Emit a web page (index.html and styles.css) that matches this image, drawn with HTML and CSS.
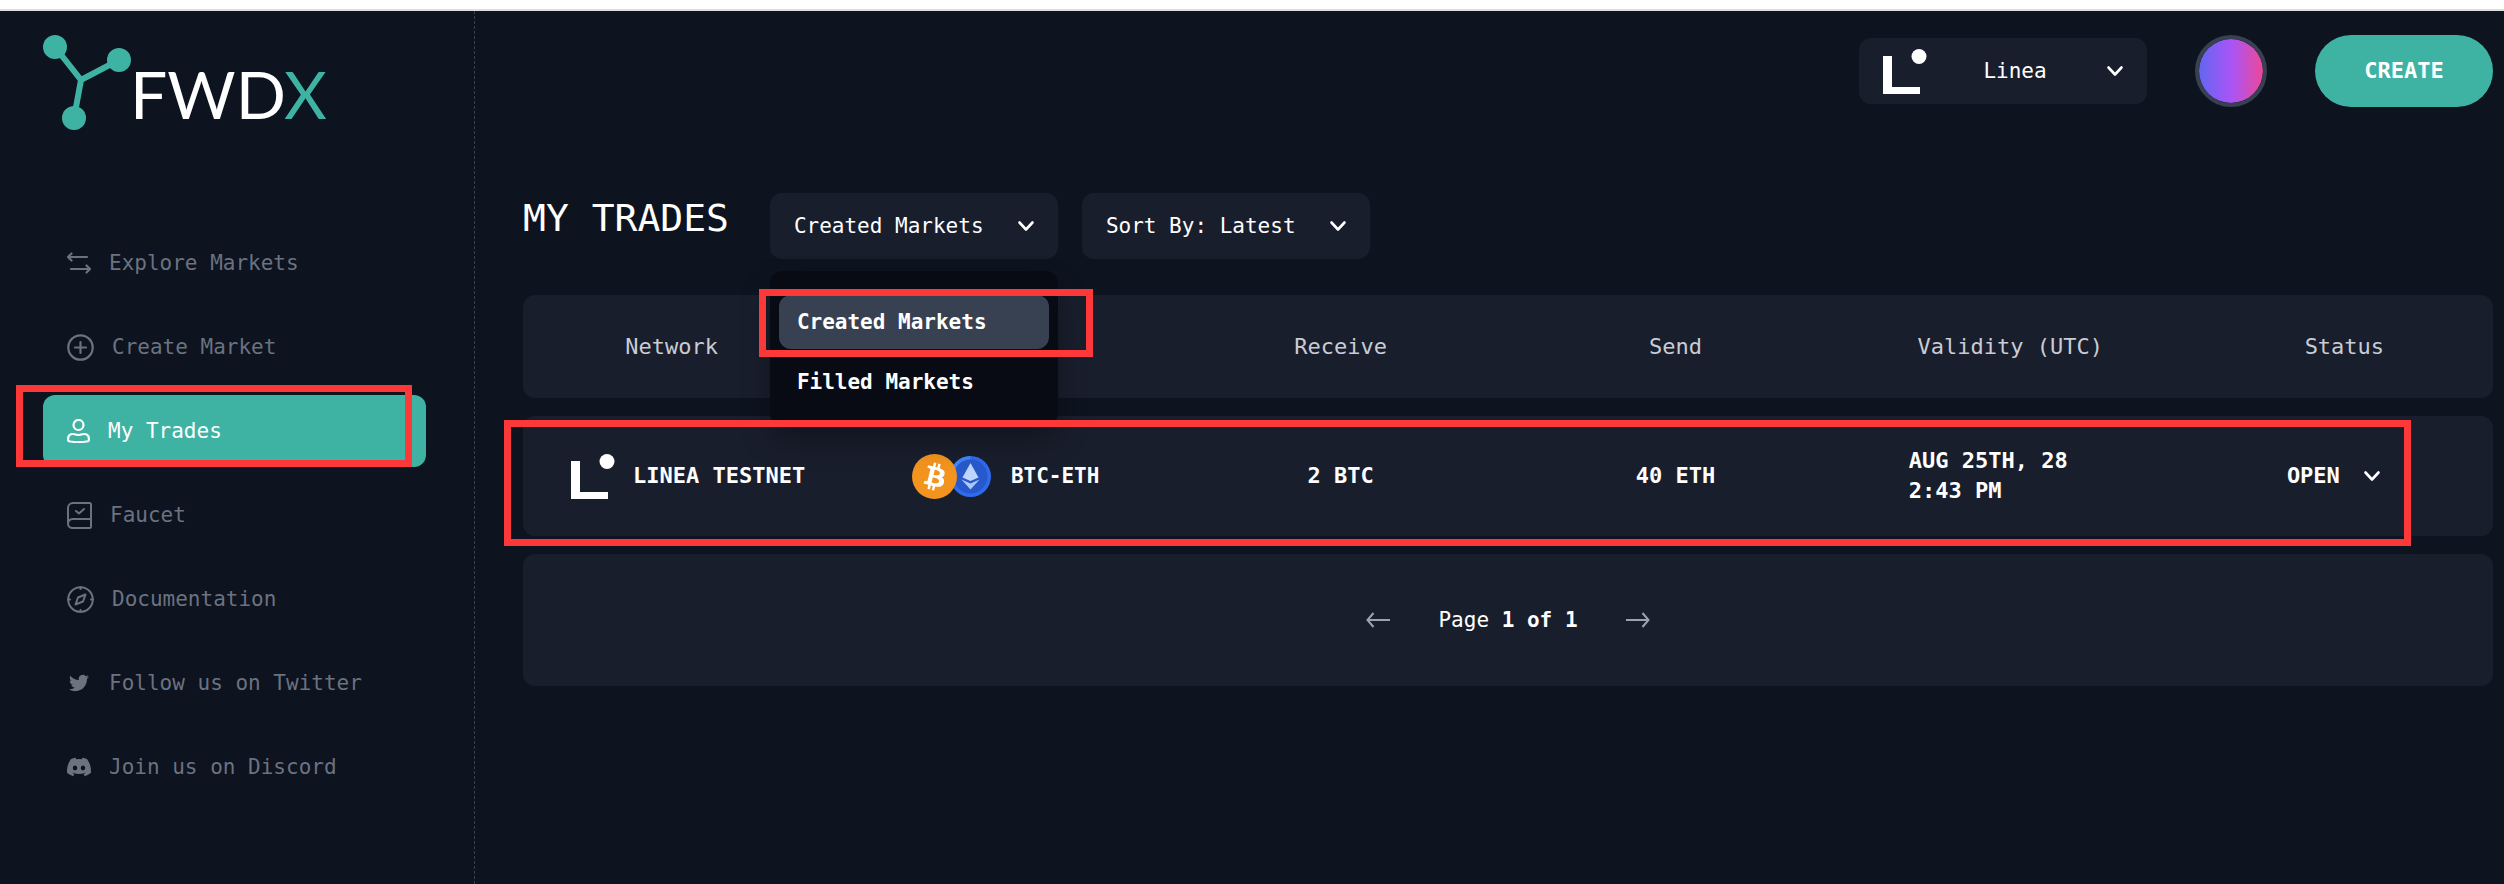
FILE: index.html
```html
<!DOCTYPE html>
<html lang="en">
<head>
  <meta charset="UTF-8">
  <meta name="viewport" content="width=device-width, initial-scale=1.0">
  <title>FWDX - My Trades</title>
  <link rel="stylesheet" href="styles.css">
</head>
<body>
  <!-- shared shapes -->
  <svg class="sprite" width="0" height="0" aria-hidden="true">
    <symbol id="chevron" viewBox="0 0 24 24">
      <path d="M5.5 8.5l6.5 7 6.5-7" fill="none" stroke="currentColor" stroke-width="2.6" stroke-linecap="round" stroke-linejoin="round"/>
    </symbol>
    <symbol id="linea" viewBox="0 0 44 45">
      <path d="M0 7h9v31h28v7H0z" fill="currentColor"/>
      <circle cx="36" cy="7.5" r="7.5" fill="currentColor"/>
    </symbol>
  </svg>

  <div class="top-strip"></div>
  <div class="layout">
    <aside class="sidebar">
      <a href="#" class="logo" aria-label="FWDX">
        <svg width="300" height="100" viewBox="0 0 300 100">
          <g fill="#3fb3a3">
            <circle cx="12" cy="12" r="12"/>
            <circle cx="76" cy="25" r="12"/>
            <circle cx="31" cy="83" r="12"/>
          </g>
          <path d="M12 12l26 33 38-20M38 45l-7 38" fill="none" stroke="#3fb3a3" stroke-width="6"/>
          <text x="87" y="84" class="logo-text">FWD<tspan class="logo-x">X</tspan></text>
        </svg>
      </a>
      <nav class="nav">
        <a href="#" class="nav-item">
          <svg width="24" height="24" viewBox="0 0 24 24" fill="none" stroke="currentColor" stroke-width="2.2" stroke-linecap="round" stroke-linejoin="round"><path d="M20 6H1.5M4.500 2.500L1 6l3.500 3.500M4 18h18.500M19.500 14.500L23 18l-3.500 3.500"/></svg>
          <span>Explore Markets</span>
        </a>
        <a href="#" class="nav-item">
          <svg width="27" height="27" viewBox="0 0 27 27" fill="none" stroke="currentColor" stroke-width="2.2" stroke-linecap="round"><circle cx="13.500" cy="13.500" r="12.200"/><path d="M8 13.500h11M13.500 8v11"/></svg>
          <span>Create Market</span>
        </a>
        <a href="#" class="nav-item active">
          <svg width="23" height="24" viewBox="0 0 23 24" fill="none" stroke="currentColor" stroke-width="2.2"><circle cx="11.500" cy="6" r="5"/><path d="M6 15c2.500 0 3 1 5.500 1s3-1 5.500-1c3.500 0 5 2 5 5.500 0 1.500-.5 2-2 2-5.500.7-11.500.7-17 0-1.500 0-2-.5-2-2C1 17 2.500 15 6 15z"/></svg>
          <span>My Trades</span>
          <i class="mark mark-nav"></i>
        </a>
        <a href="#" class="nav-item">
          <svg width="25" height="27" viewBox="0 0 25 27" fill="none" stroke="currentColor" stroke-width="2" stroke-linecap="round" stroke-linejoin="round"><path d="M6 1h16.500c.8 0 1.500.7 1.500 1.500v22c0 .8-.7 1.500-1.500 1.500H5.500A4.500 4.500 0 0 1 1 21.500V6a5 5 0 0 1 5-5zM1 21.500A4.500 4.500 0 0 1 5.500 17H24M9 9l3 2.500L17 7"/></svg>
          <span>Faucet</span>
        </a>
        <a href="#" class="nav-item">
          <svg width="27" height="27" viewBox="0 0 27 27" fill="none" stroke="currentColor" stroke-width="2" stroke-linecap="round" stroke-linejoin="round"><circle cx="13.500" cy="13.500" r="12.300"/><path d="M18.500 8.500l-2.500 7-7.500 3 2.500-7zM13.500 1v2M13.500 24v2M1 13.500h2M24 13.500h2"/></svg>
          <span>Documentation</span>
        </a>
        <a href="#" class="nav-item">
          <svg width="24" height="20" viewBox="-2 0 28 24" fill="currentColor"><path d="M23.953 4.570a10 10 0 0 1-2.825.775 4.958 4.958 0 0 0 2.163-2.723c-.951.555-2.005.959-3.127 1.184a4.920 4.920 0 0 0-8.384 4.482C7.690 8.095 4.067 6.130 1.640 3.162a4.822 4.822 0 0 0-.666 2.475c0 1.710.870 3.213 2.188 4.096a4.904 4.904 0 0 1-2.228-.616v.060a4.923 4.923 0 0 0 3.946 4.827 4.996 4.996 0 0 1-2.212.085 4.936 4.936 0 0 0 4.604 3.417 9.867 9.867 0 0 1-6.102 2.105c-.390 0-.779-.023-1.170-.067a13.995 13.995 0 0 0 7.557 2.209c9.053 0 13.998-7.496 13.998-13.985 0-.210 0-.420-.015-.630A9.935 9.935 0 0 0 24 4.590z"/></svg>
          <span>Follow us on Twitter</span>
        </a>
        <a href="#" class="nav-item">
          <svg width="24" height="24" viewBox="0 0 24 24" fill="currentColor"><path d="M20.317 4.370a19.791 19.791 0 0 0-4.885-1.515.074.074 0 0 0-.079.037c-.210.375-.444.864-.608 1.250a18.270 18.270 0 0 0-5.487 0 12.640 12.640 0 0 0-.617-1.250.077.077 0 0 0-.079-.037A19.736 19.736 0 0 0 3.677 4.370a.070.070 0 0 0-.032.027C.533 9.046-.320 13.580.099 18.057a.082.082 0 0 0 .031.057 19.900 19.900 0 0 0 5.993 3.030.078.078 0 0 0 .084-.028c.462-.630.874-1.295 1.226-1.994a.076.076 0 0 0-.041-.106 13.107 13.107 0 0 1-1.872-.892.077.077 0 0 1-.008-.128c.126-.094.252-.192.372-.291a.074.074 0 0 1 .077-.010c3.928 1.793 8.180 1.793 12.062 0a.074.074 0 0 1 .078.009c.120.099.246.198.373.292a.077.077 0 0 1-.006.127 12.299 12.299 0 0 1-1.873.892.077.077 0 0 0-.041.107c.360.698.772 1.362 1.225 1.993a.076.076 0 0 0 .084.028 19.839 19.839 0 0 0 6.002-3.030.077.077 0 0 0 .032-.054c.500-5.177-.838-9.674-3.549-13.660a.061.061 0 0 0-.031-.030zM8.020 15.330c-1.183 0-2.157-1.085-2.157-2.419 0-1.333.956-2.419 2.157-2.419 1.210 0 2.176 1.096 2.157 2.420 0 1.333-.956 2.418-2.157 2.418zm7.975 0c-1.183 0-2.157-1.085-2.157-2.419 0-1.333.955-2.419 2.157-2.419 1.210 0 2.176 1.096 2.157 2.420 0 1.333-.946 2.418-2.157 2.418z"/></svg>
          <span>Join us on Discord</span>
        </a>
      </nav>
    </aside>

    <main class="main">
      <header class="header">
        <div class="select-box">
          <svg width="44" height="45"><use href="#linea"/></svg>
          <select class="centered" aria-label="Network">
            <option>Linea</option>
          </select>
          <svg width="24" height="24"><use href="#chevron"/></svg>
        </div>
        <button type="button" class="avatar" aria-label="Account"></button>
        <button type="button" class="create-btn">CREATE</button>
      </header>

      <div class="toolbar">
        <h1>MY TRADES</h1>
        <div class="dropdown">
          <button type="button" class="select-box" aria-haspopup="menu" aria-expanded="true">
            <span>Created Markets</span>
            <svg width="24" height="24"><use href="#chevron"/></svg>
          </button>
          <div class="menu" role="menu">
            <button type="button" role="menuitem" class="selected">Created Markets<i class="mark mark-menu"></i></button>
            <button type="button" role="menuitem">Filled Markets</button>
          </div>
        </div>
        <div class="select-box">
          <select aria-label="Sort by">
            <option>Sort By: Latest</option>
          </select>
          <svg width="24" height="24"><use href="#chevron"/></svg>
        </div>
      </div>

      <div class="table-wrap">
        <table class="trades">
          <thead>
            <tr>
              <th class="end">Network</th>
              <th>Pair</th>
              <th>Receive</th>
              <th>Send</th>
              <th>Validity (UTC)</th>
              <th class="end">Status</th>
            </tr>
          </thead>
          <tbody>
            <tr>
              <td>
                <div class="network">
                  <svg width="44" height="45"><use href="#linea"/></svg>
                  <span>LINEA TESTNET</span>
                </div>
              </td>
              <td>
                <div class="pair">
                  <span class="coins">
                    <svg class="btc" width="45" height="45" viewBox="0 0 32 32">
                      <circle cx="16" cy="16" r="16" fill="#f2941e"/>
                      <path fill="#fff" d="M23.189 14.020c.314-2.096-1.283-3.223-3.465-3.975l.708-2.840-1.728-.430-.690 2.765c-.454-.114-.920-.220-1.385-.326l.695-2.783L15.596 6l-.708 2.839c-.376-.086-.746-.170-1.104-.260l.002-.009-2.384-.595-.460 1.846s1.283.294 1.256.312c.700.175.826.638.805 1.006l-.806 3.235c.048.012.110.030.180.057l-.183-.045-1.130 4.532c-.086.212-.303.531-.793.410.018.025-1.256-.313-1.256-.313l-.858 1.978 2.250.561c.418.105.828.215 1.231.318l-.715 2.872 1.727.430.708-2.840c.472.127.930.245 1.378.357l-.706 2.828 1.728.430.715-2.866c2.948.558 5.164.333 6.097-2.333.752-2.146-.037-3.385-1.588-4.192 1.130-.260 1.980-1.003 2.207-2.538zm-3.950 5.538c-.533 2.147-4.148.986-5.320.695l.950-3.805c1.172.293 4.929.872 4.370 3.110zm.535-5.569c-.487 1.953-3.495.960-4.470.717l.860-3.450c.975.243 4.118.696 3.610 2.733z"/>
                    </svg>
                    <svg class="eth" width="41" height="41" viewBox="0 0 41 41">
                      <circle cx="20.500" cy="20.500" r="20.500" fill="#2f6bee"/>
                      <path d="M20.500 0A20.500 20.500 0 0 0 0 20.500h4A16.500 16.500 0 0 1 20.500 4z" fill="#3f86fb"/>
                      <circle cx="20.500" cy="20.500" r="17" fill="#2859cc"/>
                      <path d="M20.500 7l8 14.500-8 3.500-8-3.500z" fill="#bcd6ff"/>
                      <path d="M11.500 23.500l9 4 9-4-9 10z" fill="#a9caff"/>
                    </svg>
                  </span>
                  <span>BTC-ETH</span>
                </div>
              </td>
              <td>2 BTC</td>
              <td>40 ETH</td>
              <td class="validity">AUG 25TH, 28<br>2:43 PM</td>
              <td>
                <button type="button" class="status">OPEN <svg width="24" height="24"><use href="#chevron"/></svg></button>
              </td>
            </tr>
          </tbody>
        </table>
        <i class="mark mark-row"></i>
      </div>

      <div class="pagination">
        <button type="button" aria-label="Previous page">
          <svg width="24" height="16" viewBox="0 0 24 16"><path d="M24 8H1.500M7.500 1L1.500 8l6 7" fill="none" stroke="currentColor" stroke-width="2"/></svg>
        </button>
        <span>Page <b>1 of 1</b></span>
        <button type="button" aria-label="Next page">
          <svg width="24" height="16" viewBox="0 0 24 16"><path d="M0 8h22.500M16.500 1l6 7-6 7" fill="none" stroke="currentColor" stroke-width="2"/></svg>
        </button>
      </div>
    </main>
  </div>
</body>
</html>
```
FILE: styles.css
```css
* {
  box-sizing: border-box;
}
body {
  margin: 0;
  min-height: 100vh;
  display: flex;
  flex-direction: column;
  background-color: #0d131f;
  color: #fff;
  font-family: "DejaVu Sans Mono", monospace;
  font-size: 21px;
  line-height: 30px;
}
button,
select {
  font: inherit;
  color: inherit;
  background: none;
  border: none;
  padding: 0;
  cursor: pointer;
}
svg {
  display: block;
  flex-shrink: 0;
}
.sprite {
  position: absolute;
}
.top-strip {
  height: 11px;
  background-color: #fff;
  border-bottom: 2px solid #dbe0df;
}
.layout {
  flex: 1;
  display: flex;
}

/* sidebar */
.sidebar {
  width: 475px;
  flex-shrink: 0;
  padding: 24px 48px 24px 43px;
  border-right: 1px dashed #3a404c;
}
.logo {
  display: block;
  text-decoration: none;
}
.logo-text {
  font-family: Lato, sans-serif;
  font-size: 66px;
  font-weight: 400;
  fill: #fff;
}
.logo-x {
  fill: #3fb3a3;
}
.nav {
  display: flex;
  flex-direction: column;
  gap: 12px;
  margin-top: 92px;
}
.nav-item {
  position: relative;
  display: flex;
  align-items: center;
  gap: 18px;
  height: 72px;
  padding: 0 24px;
  border-radius: 12px;
  color: #6b7280;
  text-decoration: none;
  white-space: nowrap;
}
.nav-item.active {
  background-color: #3fb3a3;
  color: #fff;
}

/* main */
.main {
  flex: 1;
  min-width: 0;
  padding: 24px 11px 24px 48px;
}
.header {
  display: flex;
  justify-content: flex-end;
  align-items: center;
  gap: 48px;
}
.select-box {
  display: flex;
  align-items: center;
  justify-content: space-between;
  width: 288px;
  height: 66px;
  padding: 0 20px 0 24px;
  border-radius: 12px;
  background-color: #191e2d;
}
.select-box select {
  flex: 1;
  min-width: 0;
  appearance: none;
}
.centered {
  text-align-last: center;
}
.avatar {
  width: 72px;
  height: 72px;
  border: 4px solid #374151;
  border-radius: 50%;
  background: linear-gradient(to right, #6366f1, #a855f7, #ec4899) padding-box;
}
.create-btn {
  width: 178px;
  height: 72px;
  border-radius: 36px;
  background-color: #3fb3a3;
  font-size: 22px;
  font-weight: bold;
}
.toolbar {
  display: flex;
  align-items: flex-start;
  gap: 24px;
  margin-top: 86px;
}
h1 {
  margin: 0 17px 0 0;
  font-size: 38px;
  font-weight: normal;
  line-height: 50px;
}
.dropdown {
  position: relative;
}
.menu {
  position: absolute;
  top: 78px;
  left: 0;
  right: 0;
  z-index: 1;
  display: flex;
  flex-direction: column;
  gap: 6px;
  padding: 24px 9px 16px;
  border-radius: 12px;
  background-color: #080b13;
  box-shadow: 0 15px 30px rgba(0, 0, 0, 0.3);
}
.menu button {
  position: relative;
  height: 54px;
  padding: 0 18px;
  border-radius: 12px;
  font-weight: bold;
  text-align: left;
}
.menu .selected {
  background-color: #374151;
}

/* trades table */
.table-wrap {
  position: relative;
  padding-top: 18px;
}
.trades {
  width: 100%;
  table-layout: fixed;
  border-collapse: separate;
  border-spacing: 0 18px;
  font-size: 22px;
}
.trades th,
.trades td {
  padding: 0;
  width: 17%;
  background-color: #191e2d;
  text-align: center;
}
.trades th {
  height: 103px;
  color: #c9ccd3;
  font-weight: normal;
}
.trades .end {
  width: 16%;
}
.trades th:first-child {
  padding-right: 18px;
}
.trades th:last-child {
  padding-left: 18px;
}
.trades td {
  height: 120px;
  font-weight: bold;
}
.trades tr > :first-child {
  border-radius: 12px 0 0 12px;
}
.trades tr > :last-child {
  border-radius: 0 12px 12px 0;
}
.network,
.pair {
  display: flex;
  align-items: center;
  gap: 20px;
}
.network {
  padding-left: 48px;
  gap: 18px;
}
.pair {
  justify-content: center;
  font-size: 21px;
}
.coins {
  display: flex;
  align-items: center;
}
.btc {
  position: relative;
}
.eth {
  margin-left: -7px;
}
.trades .validity {
  padding-left: 66px;
  text-align: left;
}
.status {
  display: inline-flex;
  align-items: center;
  gap: 20px;
}
.pagination {
  display: flex;
  align-items: center;
  justify-content: center;
  gap: 48px;
  height: 132px;
  border-radius: 12px;
  background-color: #191e2d;
}
.pagination button {
  color: #9ca3af;
}

/* red highlight frames */
.mark {
  position: absolute;
  border: 7px solid #fd3838;
  pointer-events: none;
}
.mark-nav {
  top: -10px;
  right: 14px;
  bottom: 0;
  left: -27px;
}
.mark-menu {
  top: -6px;
  right: -44px;
  bottom: -8px;
  left: -20px;
}
.mark-row {
  z-index: 2;
  top: 161px;
  right: 82px;
  left: -19px;
  height: 126px;
}
```
